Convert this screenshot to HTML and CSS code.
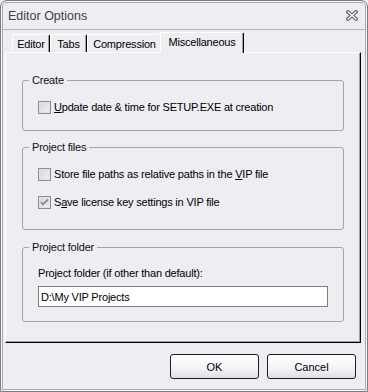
FILE: index.html
```html
<!DOCTYPE html>
<html lang="en">

<head>
    <meta charset="UTF-8">
    <meta name="viewport" content="width=device-width, initial-scale=1.0">
    <title>Editor Options</title>
    <link rel="stylesheet" href="styles.css">
</head>

<body>
    <div class="window">
        <div class="titlebar">
            <span class="title">Editor Options</span>
            <svg class="close" width="12" height="11" viewBox="0 0 12 11">
                <path d="M2 2 L10 9 M10 2 L2 9" stroke="#5c5c68" stroke-width="3.6" stroke-linecap="square" />
                <path d="M2 2 L10 9 M10 2 L2 9" stroke="#ffffff" stroke-width="1.4" stroke-linecap="square" />
            </svg>
        </div>

        <div class="client">
            <div class="tabs">
                <div class="tab tab-editor">Editor</div>
                <div class="tab tab-tabs">Tabs</div>
                <div class="tab tab-compression">Compression</div>
                <div class="tab tab-misc active">Miscellaneous</div>
            </div>

            <div class="panel">
                <fieldset class="group group-create">
                    <legend>Create</legend>
                    <div class="group-body">
                        <label class="check">
                            <span class="box"></span>
                            <span class="check-text"><u>U</u>pdate date &amp; time for SETUP.EXE at creation</span>
                        </label>
                    </div>
                </fieldset>

                <fieldset class="group group-files">
                    <legend>Project files</legend>
                    <div class="group-body">
                        <label class="check">
                            <span class="box"></span>
                            <span class="check-text">Store file paths as relative paths in the <u>V</u>IP file</span>
                        </label>
                        <label class="check">
                            <span class="box checked">
                                <svg width="9" height="9" viewBox="0 0 9 9">
                                    <path d="M1 4 L3 6.5 L8 1.5" fill="none" stroke="#8a8a8e" stroke-width="1.8" />
                                </svg>
                            </span>
                            <span class="check-text">S<u>a</u>ve license key settings in VIP file</span>
                        </label>
                    </div>
                </fieldset>

                <fieldset class="group group-folder">
                    <legend>Project folder</legend>
                    <div class="group-body">
                        <div class="field-label">Project folder (if other than default):</div>
                        <input type="text" class="field-input" value="D:\My VIP Projects">
                    </div>
                </fieldset>
            </div>

            <div class="buttons">
                <button class="btn">OK</button>
                <button class="btn">Cancel</button>
            </div>
        </div>
    </div>
</body>

</html>
```

FILE: styles.css
```css
/* Basic reset */
* {
    margin: 0;
    padding: 0;
    box-sizing: border-box;
}

body {
    font-family: "Liberation Sans", Arial, sans-serif;
    font-size: 11px;
    letter-spacing: -0.2px;
    color: #000;
    background-color: #eeedf2;
}

.window {
    width: 368px;
    height: 392px;
    display: flex;
    flex-direction: column;
    background-color: #eeedf2;
    border: 1px solid #7b7b84;
    border-radius: 7px 7px 0 0;
    box-shadow: inset 0 0 0 1px #f6f6f9, inset 0 0 0 2px #a9a9b2;
}

/* Title bar */
.titlebar {
    height: 28px;
    display: flex;
    align-items: center;
    justify-content: space-between;
    padding: 2px 9px 0 7px;
}

.title {
    font-size: 12.5px;
    letter-spacing: 0;
    color: #4a3a4c;
}

.close {
    display: block;
    margin-bottom: 2px;
}

/* Client area */
.client {
    flex: 1;
    display: flex;
    flex-direction: column;
    margin: 0 2px 2px 2px;
    padding: 2px 4px 10px 2px;
    border-top: 1px solid #b4b4bd;
}

.tabs {
    display: flex;
    align-items: flex-end;
    height: 20px;
    padding-left: 7px;
}

.tab {
    height: 18px;
    display: flex;
    align-items: center;
    justify-content: center;
    padding-top: 1px;
    border-top: 1px solid #fff;
    border-left: 1px solid #fff;
    border-right: 1px solid #000;
    border-radius: 2px 2px 0 0;
    box-shadow: inset -1px 0 0 #a0a0a8;
    white-space: nowrap;
}

.tab-editor {
    width: 38px;
}

.tab-tabs {
    width: 37px;
}

.tab-compression {
    width: 75px;
}

.tab-misc {
    width: 84px;
}

.tab.active {
    position: relative;
    z-index: 1;
    height: 21px;
    margin: 0 -2px -1px -2px;
    padding-top: 0;
    padding-bottom: 2px;
    background-color: #eeedf2;
}

.panel {
    height: 291px;
    padding: 21px 16px 0 16px;
    border-top: 1px solid #fff;
    border-left: 1px solid #fff;
    border-right: 1px solid #000;
    border-bottom: 1px solid #000;
    box-shadow: inset -1px -1px 0 #a0a0a8;
}

/* Group boxes */
.group {
    border: 1px solid #a3a3ab;
    border-radius: 3px;
    min-inline-size: 0;
}

.group legend {
    margin-left: 6px;
    padding: 0 3px;
    line-height: 13px;
    color: #111;
}

.group-files {
    margin-top: 10px;
}

.group-folder {
    margin-top: 11px;
}

.group-body {
    padding: 0 15px;
}

.group-create .group-body {
    padding-top: 14px;
    padding-bottom: 16px;
}

.group-files .group-body {
    padding-top: 14px;
    padding-bottom: 20px;
    display: flex;
    flex-direction: column;
    gap: 15px;
}

.group-folder .group-body {
    padding-top: 13px;
    padding-bottom: 14px;
}

/* Checkboxes */
.check {
    display: flex;
    align-items: center;
    height: 13px;
    line-height: 13px;
}

.box {
    width: 13px;
    height: 13px;
    display: flex;
    align-items: center;
    justify-content: center;
    border: 1px solid #8d8d92;
    background: linear-gradient(135deg, #d6d6d8, #f0f0f2);
    box-shadow: inset 0 0 0 1px #e2e2e4;
}

.check-text {
    margin-left: 3px;
    white-space: nowrap;
}

.field-label {
    line-height: 13px;
    white-space: nowrap;
}

.field-input {
    display: block;
    width: 290px;
    height: 21px;
    margin-top: 6px;
    padding: 0 2px;
    font-family: "Liberation Sans", Arial, sans-serif;
    font-size: 11px;
    letter-spacing: -0.2px;
    color: #000;
    background-color: #fff;
    border: 1px solid #7c7c84;
    outline: none;
}

/* Buttons */
.buttons {
    display: flex;
    justify-content: flex-end;
    gap: 8px;
    margin-top: 11px;
    padding-right: 5px;
}

.btn {
    width: 89px;
    height: 25px;
    font-family: "Liberation Sans", Arial, sans-serif;
    font-size: 11px;
    color: #000;
    border: 1px solid #1c1c20;
    border-radius: 3px;
    background: linear-gradient(#ffffff, #f3f3f7 60%, #dedde8);
}
```
